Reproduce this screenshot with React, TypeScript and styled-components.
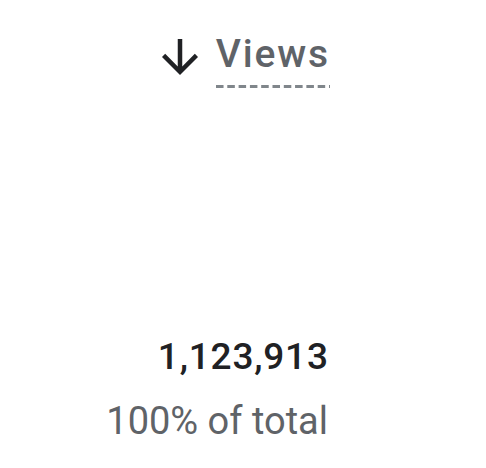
import React from 'react'
import styled, { createGlobalStyle } from 'styled-components'

const GlobalStyle = createGlobalStyle`
  html, body {
    margin: 0;
    padding: 0;
    background: #fff;
    font-family: Roboto, "Liberation Sans", Arial, sans-serif;
  }
`

const Card = styled.div`
  width: 328px;
  height: 468px;
  display: flex;
  flex-direction: column;
  align-items: flex-end;
  box-sizing: border-box;
  padding-top: 30px;
`

const Header = styled.div`
  display: flex;
  align-items: flex-start;
  gap: 9px;
`

const SortIcon = styled.svg`
  width: 54px;
  height: 54px;
  fill: #202124;
`

const Label = styled.span`
  font-size: 39px;
  line-height: 49px;
  font-weight: 500;
  letter-spacing: 1.8px;
  margin-right: -1.8px;
  color: #5f6368;
  padding-bottom: 9px;
  background-image: linear-gradient(to right, #80868b 0 8px, transparent 8px 11px);
  background-size: 11.3px 3px;
  background-repeat: repeat-x;
  background-position: 0 bottom;
`

const Spacer = styled.div`
  flex: 1;
`

const Value = styled.div`
  font-size: 37px;
  line-height: 44px;
  font-weight: 500;
  letter-spacing: 0.8px;
  margin-right: -0.8px;
  color: #202124;
`

const Share = styled.div`
  font-size: 38px;
  line-height: 44px;
  font-weight: 400;
  color: #5f6368;
  margin-top: 20px;
  margin-bottom: 25px;
`

export default function App() {
  return (
    <>
      <GlobalStyle />
      <Card>
        <Header>
          <SortIcon viewBox="0 0 24 24">
            <path d="M20 12l-1.41-1.41L13 16.17V4h-2v12.17l-5.58-5.59L4 12l8 8 8-8z" />
          </SortIcon>
          <Label>Views</Label>
        </Header>
        <Spacer />
        <Value>1,123,913</Value>
        <Share>100% of total</Share>
      </Card>
    </>
  )
}
